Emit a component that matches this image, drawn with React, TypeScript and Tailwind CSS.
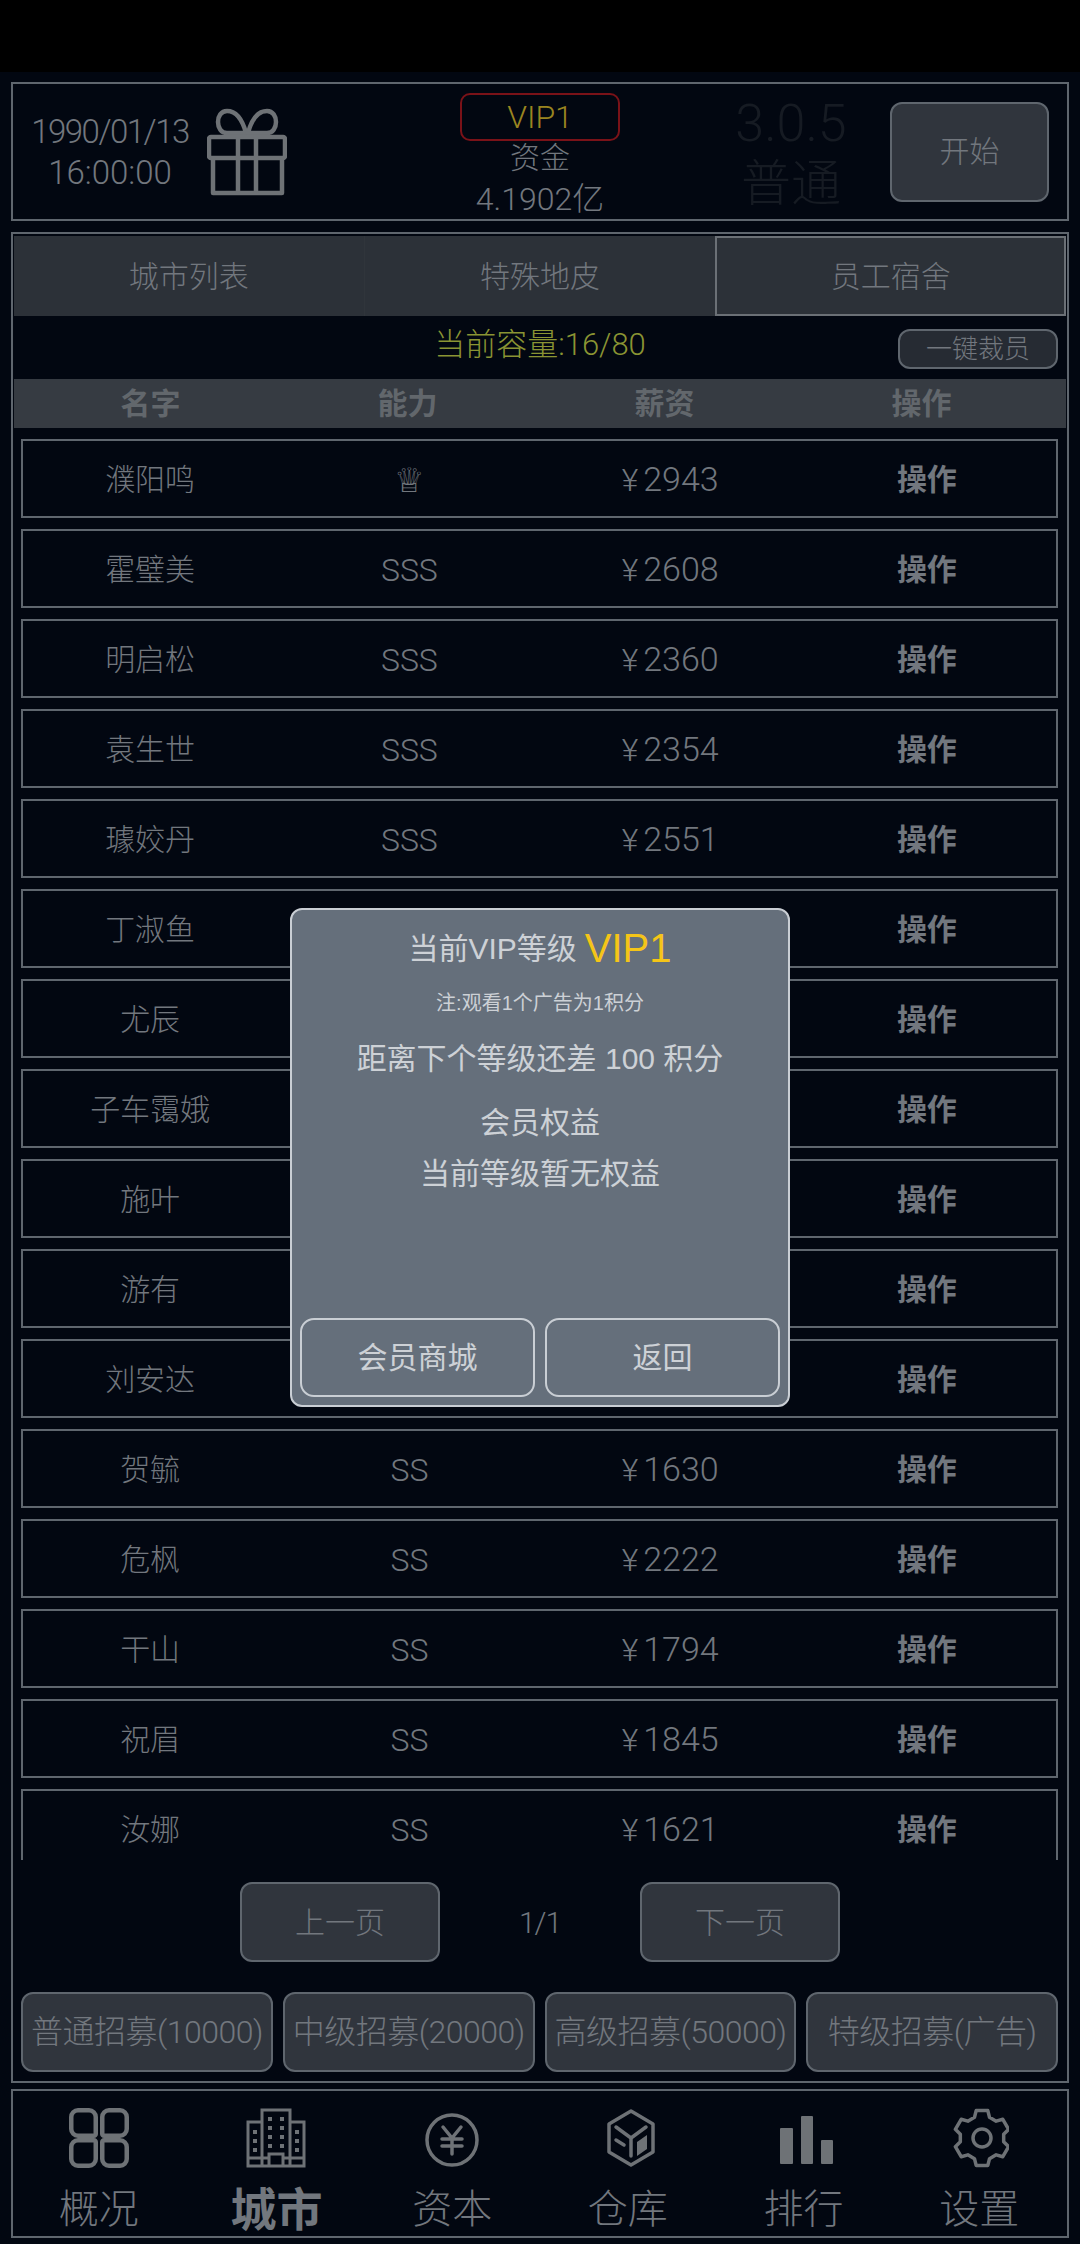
const staff = [
  { name: "濮阳鸣", level: "♕", pay: "2943" },
  { name: "霍璧美", level: "SSS", pay: "2608" },
  { name: "明启松", level: "SSS", pay: "2360" },
  { name: "袁生世", level: "SSS", pay: "2354" },
  { name: "璩姣丹", level: "SSS", pay: "2551" },
  { name: "丁淑鱼", level: "SSS", pay: "2410" },
  { name: "尤辰", level: "SS", pay: "1980" },
  { name: "子车霭娥", level: "SS", pay: "1755" },
  { name: "施叶", level: "SS", pay: "2036" },
  { name: "游有", level: "SS", pay: "1688" },
  { name: "刘安达", level: "SS", pay: "1902" },
  { name: "贺毓", level: "SS", pay: "1630" },
  { name: "危枫", level: "SS", pay: "2222" },
  { name: "干山", level: "SS", pay: "1794" },
  { name: "祝眉", level: "SS", pay: "1845" },
  { name: "汝娜", level: "SS", pay: "1621" },
];

const recruits = ["普通招募(10000)", "中级招募(20000)", "高级招募(50000)", "特级招募(广告)"];

const gearPath = () => {
  const pt = (deg: number, r: number) => {
    const a = ((deg - 90) * Math.PI) / 180;
    return `${(30 + r * Math.cos(a)).toFixed(2)} ${(30 + r * Math.sin(a)).toFixed(2)}`;
  };
  const parts: string[] = [];
  for (let i = 0; i < 6; i++) {
    const c = i * 60;
    parts.push(pt(c - 20, 22), pt(c - 12, 28), pt(c + 12, 28), pt(c + 20, 22));
  }
  return `M${parts.join("L")}Z`;
};

const GiftIcon = () => (
  <svg width="80" height="88" viewBox="0 0 80 88" fill="none" stroke="#6e7276" strokeWidth="4.5" strokeLinejoin="round">
    <path d="M39 25H20C8 25 8 3 20 3C30 3 36 14 39 25Z" />
    <path d="M41 25H60C72 25 72 3 60 3C50 3 44 14 41 25Z" />
    <rect x="2" y="29" width="76" height="21" rx="2" />
    <path d="M6 50V85H75V50" />
    <path d="M31 29V85M49 29V85" />
  </svg>
);

const quarter = "M9 2.25H20A6.75 6.75 0 0 1 26.75 9V26A1.75 1.75 0 0 1 25 27.75H9A6.75 6.75 0 0 1 2.25 21V9A6.75 6.75 0 0 1 9 2.25Z";

const OverviewIcon = () => (
  <svg width="60" height="60" viewBox="0 0 60 60" fill="none" stroke="#6e7276" strokeWidth="4.5">
    <path d={quarter} />
    <path transform="matrix(-1 0 0 1 60 0)" d={quarter} />
    <path transform="matrix(1 0 0 -1 0 60)" d={quarter} />
    <path transform="matrix(-1 0 0 -1 60 60)" d={quarter} />
  </svg>
);

const CityIcon = () => (
  <svg width="60" height="60" viewBox="0 0 60 60" fill="none" stroke="#6e7276" strokeWidth="3">
    <path d="M16 58V2H44V58" />
    <path d="M16 14H2V58H58V14H44" />
    <path d="M2 50H23M37 50H58" />
    <path d="M23 58V46H37V58" />
    <g fill="#6e7276" stroke="none">
      <rect x="22" y="9" width="4" height="4" />
      <rect x="34" y="9" width="4" height="4" />
      <rect x="22" y="18" width="4" height="4" />
      <rect x="34" y="18" width="4" height="4" />
      <rect x="22" y="27" width="4" height="4" />
      <rect x="34" y="27" width="4" height="4" />
      <rect x="22" y="36" width="4" height="4" />
      <rect x="34" y="36" width="4" height="4" />
      <rect x="7" y="22" width="4" height="4" />
      <rect x="7" y="31" width="4" height="4" />
      <rect x="7" y="40" width="4" height="4" />
      <rect x="49" y="22" width="4" height="4" />
      <rect x="49" y="31" width="4" height="4" />
      <rect x="49" y="40" width="4" height="4" />
    </g>
  </svg>
);

const YenIcon = () => (
  <svg width="60" height="60" viewBox="0 0 60 60" fill="none" stroke="#6e7276" strokeWidth="3.5">
    <circle cx="30" cy="32" r="25" />
    <path d="M21 19L30 30L39 19M30 30V46M20 31H40M20 38H40" strokeLinecap="round" />
  </svg>
);

const BoxIcon = () => (
  <svg width="60" height="60" viewBox="0 0 60 60" fill="none" stroke="#6e7276" strokeWidth="3.5" strokeLinejoin="round">
    <path d="M33 3L55 16V44L33 57L11 44V16Z" />
    <path d="M18 19L33 30L48 19M33 30V48" strokeLinecap="round" />
    <path d="M18 32L26 37" strokeLinecap="round" />
    <path d="M39 34L49 27V41L39 48Z" fill="#6e7276" stroke="none" />
  </svg>
);

const BarsIcon = () => (
  <svg width="60" height="60" viewBox="0 0 60 60" fill="#6e7276">
    <rect x="7" y="20" width="13" height="36" rx="1" />
    <rect x="28" y="8" width="12" height="48" rx="1" />
    <rect x="48" y="32" width="12" height="24" rx="1" />
  </svg>
);

const GearIcon = () => (
  <svg width="60" height="60" viewBox="0 0 60 60" fill="none" stroke="#6e7276" strokeWidth="3.5" strokeLinejoin="round">
    <g transform="translate(3 0)">
      <path d={gearPath()} />
      <circle cx="30" cy="30" r="9" />
    </g>
  </svg>
);

const navItems = [
  { label: "概况", icon: <OverviewIcon />, shift: true },
  { label: "城市", icon: <CityIcon />, active: true },
  { label: "资本", icon: <YenIcon /> },
  { label: "仓库", icon: <BoxIcon /> },
  { label: "排行", icon: <BarsIcon /> },
  { label: "设置", icon: <GearIcon /> },
];

export default function App() {
  return (
    <div className="relative flex h-[2244px] w-[1080px] flex-col overflow-hidden bg-[#020711] text-[30px] font-light text-[#72777e] [font-family:Roboto,'Noto_Sans_CJK_SC',sans-serif]">
      <div className="h-[72px] bg-black" />

      {/* top status */}
      <div className="mx-[11px] mt-[10px] flex h-[139px] items-center border-2 border-[#5f666e]">
        <div className="w-[192px] pl-[2px] text-center text-[33px] leading-[41px]">
          <div className="tracking-[-1.5px]">1990/01/13</div>
          <div>16:00:00</div>
        </div>
        <div className="ml-[2px] w-[80px]">
          <GiftIcon />
        </div>
        <div className="ml-[173px] flex w-[160px] flex-col items-center self-start pt-[9px]">
          <div className="flex h-[48px] w-[160px] items-center justify-center rounded-[10px] border-2 border-[#7a1218] text-[32px] text-[#9a8520]">
            VIP1
          </div>
          <div className="h-[38px] leading-[34px]">资金</div>
          <div className="h-[40px] text-[32px] leading-[40px]">4.1902亿</div>
        </div>
        <div className="ml-[70px] w-[202px] pt-[4px] text-center text-[52px] leading-[60px] text-[#161b23]">
          <div>3.0.5</div>
          <div className="text-[50px]">普通</div>
        </div>
        <button className="ml-[-2px] flex h-[100px] w-[159px] items-center justify-center rounded-[12px] border-2 border-[#5f666e] bg-[#30353d]">
          开始
        </button>
      </div>

      {/* main panel */}
      <div className="mx-[11px] mt-[11px] flex h-[1851px] flex-col border-2 border-[#5f666e] pt-[2px]">
        <div className="mx-[1px] grid h-[80px] grid-cols-3 bg-[#2c3138]">
          <div className="flex items-center justify-center border-r border-[#30353b]">城市列表</div>
          <div className="flex items-center justify-center">特殊地皮</div>
          <div className="flex items-center justify-center border-2 border-[#6b7076]">员工宿舍</div>
        </div>

        <div className="relative flex h-[63px] items-center justify-center pb-[4px] text-[31px] text-[#8a9433]">
          当前容量:16/80
          <button className="absolute top-[13px] right-[9px] flex h-[40px] w-[160px] items-center justify-center rounded-[12px] border-2 border-[#5f666e] bg-[#262b33] text-[26px] text-[#72777e]">
            一键裁员
          </button>
        </div>

        <div className="mx-[1px] grid h-[49px] grid-cols-[repeat(4,257px)] items-center bg-[#363b42] pl-[8px] font-bold text-[#62676c]">
          <div className="text-center">名字</div>
          <div className="text-center">能力</div>
          <div className="text-center">薪资</div>
          <div className="text-center">操作</div>
        </div>

        <div className="mt-[11px] ml-[8px] mr-[9px] flex h-[1421px] flex-col gap-[11px] overflow-hidden">
          {staff.map((s) => (
            <div key={s.name} className="grid h-[79px] shrink-0 grid-cols-4 items-center border-2 border-[#5f666e] pt-[2px] text-center">
              <div className="pr-[4px]">{s.name}</div>
              <div className={s.level === "♕" ? "pr-[2px] text-[34px] leading-[40px] [font-family:'DejaVu_Sans',sans-serif]" : "pr-[2px] text-[32px]"}>{s.level}</div>
              <div className="pl-[3px] text-[34px]">
                <span className="mr-[5px] text-[32px]">¥</span>
                {s.pay}
              </div>
              <div className="font-bold">操作</div>
            </div>
          ))}
        </div>

        <div className="mt-[22px] flex h-[80px] items-center justify-center">
          <button className="flex h-[80px] w-[200px] items-center justify-center rounded-[12px] border-2 border-[#5f666e] bg-[#30353d]">
            上一页
          </button>
          <div className="w-[200px] text-center tracking-[-1px]">1/1</div>
          <button className="flex h-[80px] w-[200px] items-center justify-center rounded-[12px] border-2 border-[#5f666e] bg-[#30353d]">
            下一页
          </button>
        </div>

        <div className="mt-[30px] ml-[8px] mr-[9px] grid grid-cols-4 gap-[10px]">
          {recruits.map((r) => (
            <button key={r} className="flex h-[80px] items-center justify-center whitespace-nowrap rounded-[12px] border-2 border-[#5f666e] bg-[#30353d] text-[32px] tracking-[-0.5px]">
              {r}
            </button>
          ))}
        </div>
      </div>

      {/* bottom tabs */}
      <div className="mx-[11px] mt-[6px] grid h-[149px] grid-cols-6 border-2 border-[#5f666e]">
        {navItems.map((n) => (
          <div key={n.label} className={n.shift ? "flex flex-col items-center pt-[17px] pr-[4px]" : "flex flex-col items-center pt-[17px]"}>
            {n.icon}
            <div className={n.active ? "mt-[14px] text-[46px] leading-[56px] font-bold" : "mt-[14px] text-[40px] leading-[56px]"}>
              {n.label}
            </div>
          </div>
        ))}
      </div>

      {/* vip dialog */}
      <div className="absolute top-[908px] left-[290px] flex h-[499px] w-[500px] flex-col items-center rounded-[12px] border-2 border-[#c9ced4] bg-[#656f7b] text-[30px] font-normal text-[#cdd1d6] [font-family:'Liberation_Sans','Noto_Sans_CJK_SC',sans-serif]">
        <div className="mt-[8px] flex h-[60px] items-center">
          当前VIP等级
          <span className="ml-[8px] text-[40px] text-[#f5c518]">VIP1</span>
        </div>
        <div className="mt-[11px] text-[20px] leading-[28px]">注:观看1个广告为1积分</div>
        <div className="mt-[22px] leading-[40px]">距离下个等级还差 100 积分</div>
        <div className="mt-[18px] leading-[51px]">会员权益</div>
        <div className="leading-[51px]">当前等级暂无权益</div>
        <div className="mt-auto mb-[8px] flex gap-[10px]">
          <button className="flex h-[79px] w-[235px] items-center justify-center rounded-[14px] border-2 border-[#c9ced4]">
            会员商城
          </button>
          <button className="flex h-[79px] w-[235px] items-center justify-center rounded-[14px] border-2 border-[#c9ced4]">
            返回
          </button>
        </div>
      </div>
    </div>
  );
}
